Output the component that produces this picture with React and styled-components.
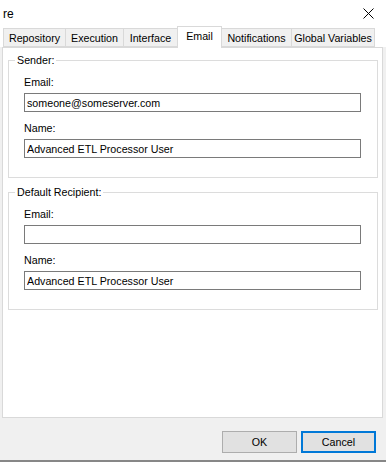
import React from "react";
import styled, { createGlobalStyle } from "styled-components";

const GlobalStyle = createGlobalStyle`
  * { box-sizing: border-box; }
  body {
    margin: 0;
    font-family: "Liberation Sans", Arial, sans-serif;
    font-size: 10.7px;
    color: #000;
    background: #f0f0f0;
  }
`;

const tabs = [
  { label: "Repository", width: 63 },
  { label: "Execution", width: 59 },
  { label: "Interface", width: 55 },
  { label: "Email", width: 45, active: true },
  { label: "Notifications", width: 71 },
  { label: "Global Variables", width: 84 },
];

const App = () => {
  return (
    <>
      <GlobalStyle />
      <Window>
        <TitleBar>
          <Caption>re</Caption>
          <CloseIcon width="11" height="11" viewBox="0 0 11 11">
            <path d="M0.5 0.5 L10.5 10.5 M10.5 0.5 L0.5 10.5" stroke="#000" strokeWidth="1" />
          </CloseIcon>
        </TitleBar>
        <TabStrip>
          {tabs.map((t) => (
            <Tab key={t.label} $active={t.active} style={{ width: t.width }}>
              {t.label}
            </Tab>
          ))}
        </TabStrip>
        <Panel>
          <Group>
            <Legend>Sender:</Legend>
            <GroupBody>
              <Field>
                <Label>Email:</Label>
                <Input defaultValue="someone@someserver.com" />
              </Field>
              <Field>
                <Label>Name:</Label>
                <Input defaultValue="Advanced ETL Processor User" />
              </Field>
            </GroupBody>
          </Group>
          <Group>
            <Legend>Default Recipient:</Legend>
            <GroupBody>
              <Field>
                <Label>Email:</Label>
                <Input defaultValue="" />
              </Field>
              <Field>
                <Label>Name:</Label>
                <Input defaultValue="Advanced ETL Processor User" />
              </Field>
            </GroupBody>
          </Group>
        </Panel>
        <Footer>
          <Button>OK</Button>
          <Button $focused>Cancel</Button>
        </Footer>
      </Window>
    </>
  );
};

const Window = styled.div`
  width: 386px;
  height: 462px;
  display: flex;
  flex-direction: column;
  background: #f0f0f0;
  border-bottom: 2px solid #878787;
`;

const TitleBar = styled.div`
  height: 26px;
  flex-shrink: 0;
  background: #fff;
  display: flex;
  align-items: center;
  justify-content: space-between;
  padding: 1px 12px 0 3px;
`;

const Caption = styled.span`
  font-size: 12px;
`;

const CloseIcon = styled.svg`
  display: block;
`;

const TabStrip = styled.div`
  height: 21px;
  flex-shrink: 0;
  background: #fff;
  display: flex;
  align-items: flex-end;
  padding-left: 3px;
  position: relative;
  z-index: 1;
`;

const Tab = styled.div`
  height: ${(p) => (p.$active ? "22px" : "19px")};
  margin-bottom: ${(p) => (p.$active ? "-1px" : "0")};
  background: ${(p) => (p.$active ? "#fff" : "#f0f0f0")};
  border: 1px solid #d9d9d9;
  border-bottom: ${(p) => (p.$active ? "none" : "1px solid #d9d9d9")};
  margin-right: -1px;
  display: flex;
  align-items: ${(p) => (p.$active ? "flex-start" : "center")};
  padding-top: ${(p) => (p.$active ? "3px" : "0")};
  justify-content: center;
  white-space: nowrap;
`;

const Panel = styled.div`
  flex: 1;
  margin: 0 3px 0 2px;
  border: 1px solid #d9d9d9;
  background: #fff;
  padding: 0 4px 0 5px;
`;

const Group = styled.fieldset`
  margin: 6px 0 0;
  padding: 0;
  border: 1px solid #dcdcdc;
  min-width: 0;
  & + & {
    margin-top: 8px;
  }
`;

const Legend = styled.legend`
  margin-left: 6px;
  padding: 0 2px;
  line-height: 13px;
`;

const GroupBody = styled.div`
  padding: 9px 16px 19px 15px;
  display: flex;
  flex-direction: column;
  gap: 10px;
`;

const Field = styled.div`
  display: flex;
  flex-direction: column;
  gap: 5px;
`;

const Label = styled.label`
  line-height: 12px;
`;

const Input = styled.input`
  height: 19px;
  width: 100%;
  border: 1px solid #7a7a7a;
  padding: 0 2px;
  font: inherit;
  color: #000;
  background: #fff;
  outline: none;
`;

const Footer = styled.div`
  height: 42px;
  flex-shrink: 0;
  display: flex;
  justify-content: flex-end;
  align-items: flex-start;
  gap: 4px;
  padding: 13px 10px 0 0;
`;

const Button = styled.button`
  width: 75px;
  height: 22px;
  font: inherit;
  color: #000;
  background: #e1e1e1;
  border: ${(p) => (p.$focused ? "2px solid #0078d7" : "1px solid #adadad")};
  padding: 0;
`;

export default App;
